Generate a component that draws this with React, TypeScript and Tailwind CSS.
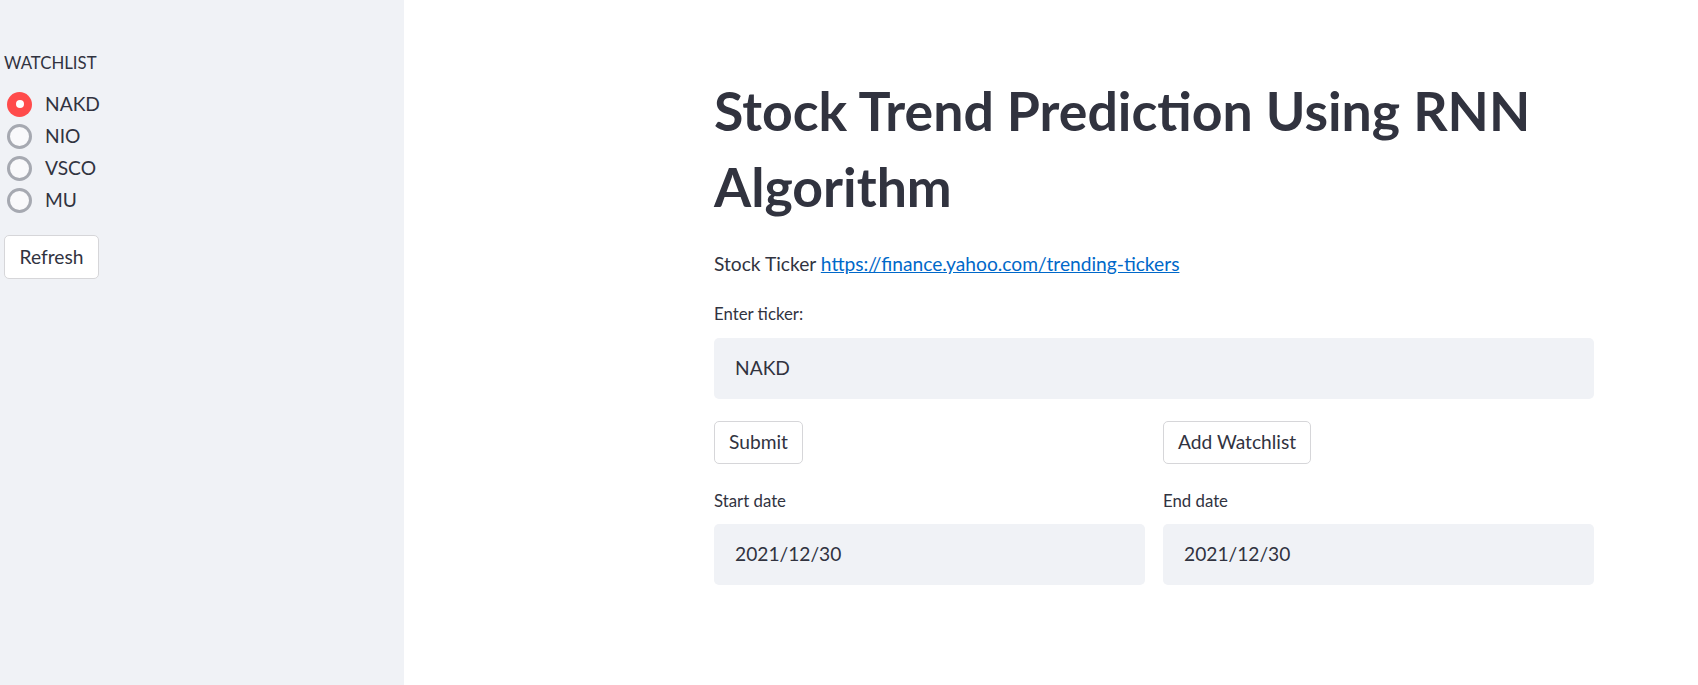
import React from "react";

const tickers = ["NAKD", "NIO", "VSCO", "MU"];

function Radio({ label, checked }: { label: string; checked: boolean }) {
  return (
    <label className="flex h-[32px] items-center">
      {checked ? (
        <span className="ml-[3px] flex h-[25px] w-[25px] items-center justify-center rounded-full bg-[#ff4b4b]">
          <span className="h-[8px] w-[8px] rounded-full bg-white" />
        </span>
      ) : (
        <span className="ml-[3px] h-[25px] w-[25px] rounded-full border-[3px] border-[#a6a9b1] bg-[#f9f9fb]" />
      )}
      <span className="ml-[13px] text-[19.2px] text-[#31333f]">{label}</span>
    </label>
  );
}

function Button({ children }: { children: React.ReactNode }) {
  return (
    <button className="h-[43px] rounded-[5px] border border-[#d6d6d9] bg-white px-[14px] text-[19.2px] text-[#31333f]">
      {children}
    </button>
  );
}

function Field({ label, value }: { label: string; value: string }) {
  return (
    <div className="flex flex-col">
      <div className="mt-[25px] h-[24px] text-[16.8px] leading-[24px] text-[#31333f]">
        {label}
      </div>
      <div className="mt-[11px] flex h-[61px] items-center rounded-[5px] bg-[#f0f2f6] pl-[21px] text-[19.2px] text-[#31333f]">
        {value}
      </div>
    </div>
  );
}

export default function App() {
  return (
    <div
      className="flex h-[685px] w-full overflow-hidden bg-white"
      style={{ fontFamily: "Lato, 'Liberation Sans', sans-serif" }}
    >
      <aside className="w-[404px] shrink-0 bg-[#f0f2f6] pl-[4px] pt-[51px]">
        <div className="flex h-[24px] items-center text-[16.8px] text-[#31333f]">
          WATCHLIST
        </div>

        <div className="mt-[13px] flex flex-col">
          {tickers.map((t, i) => (
            <Radio key={t} label={t} checked={i === 0} />
          ))}
        </div>

        <button className="mt-[19px] h-[44px] w-[95px] rounded-[5px] border border-[#d6d6d9] bg-white text-[19.2px] text-[#31333f]">
          Refresh
        </button>
      </aside>

      <main className="flex-1 pl-[310px] pt-[72px]">
        <div className="w-[880px]">
          <h1 className="text-[53.6px] font-bold leading-[76px] text-[#31333f]">
            Stock Trend Prediction Using RNN
            <br />
            Algorithm
          </h1>

          <p className="mt-[26px] text-[19.2px] leading-[28px] text-[#31333f]">
            Stock Ticker{" "}
            <a href="#" className="text-[#0068c9] underline">
              https://finance.yahoo.com/trending-tickers
            </a>
          </p>

          <div className="mt-[24px] text-[16.8px] leading-[24px] text-[#31333f]">
            Enter ticker:
          </div>
          <div className="mt-[12px] flex h-[61px] items-center rounded-[5px] bg-[#f0f2f6] pl-[21px] text-[19.2px] text-[#31333f]">
            NAKD
          </div>

          <div className="mt-[22px] grid grid-cols-2 gap-x-[18px]">
            <div className="flex flex-col items-start">
              <Button>Submit</Button>
            </div>
            <div className="flex flex-col items-start">
              <Button>Add Watchlist</Button>
            </div>
            <Field label="Start date" value="2021/12/30" />
            <Field label="End date" value="2021/12/30" />
          </div>
        </div>
      </main>
    </div>
  );
}
